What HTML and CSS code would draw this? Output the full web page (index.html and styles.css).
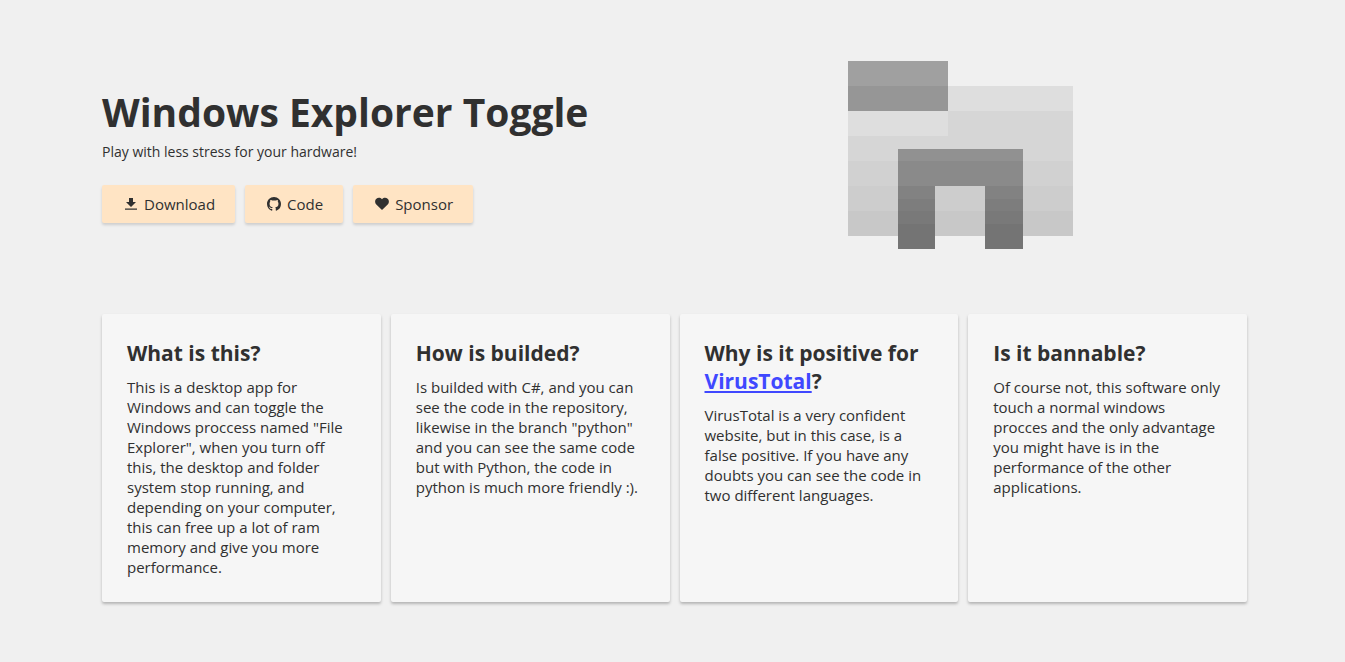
FILE: index.html
```html
<!DOCTYPE html>
<html lang="en">
<head>
<meta charset="utf-8">
<meta name="viewport" content="width=device-width, initial-scale=1">
<title>Windows Explorer Toggle</title>
<link rel="stylesheet" href="styles.css">
</head>
<body>
<main class="page">
  <header class="hero">
    <div class="intro">
      <h1 class="title">Windows Explorer Toggle</h1>
      <p class="tagline">Play with less stress for your hardware!</p>
      <div class="actions">
        <button class="button" type="button"><svg class="icon" viewBox="0 0 14 14" aria-hidden="true"><path d="M5 1h4v4h3L7 10 2 5h3zM1 11.500h12v1.300H1z"/></svg>Download</button>
        <button class="button" type="button"><svg class="icon" viewBox="0 0 16 16" aria-hidden="true"><path d="M8 0C3.580 0 0 3.580 0 8c0 3.540 2.290 6.530 5.470 7.590.4.070.55-.17.55-.38 0-.19-.01-.82-.01-1.490-2.010.37-2.530-.49-2.690-.94-.09-.23-.48-.94-.82-1.130-.28-.15-.68-.52-.01-.53.63-.01 1.080.58 1.230.82.72 1.210 1.870.87 2.330.66.07-.52.28-.87.51-1.070-1.780-.2-3.640-.89-3.640-3.950 0-.87.31-1.590.82-2.150-.08-.2-.36-1.020.08-2.120 0 0 .67-.21 2.200.82a7.600 7.600 0 0 1 4 0c1.530-1.040 2.200-.82 2.200-.82.44 1.100.16 1.920.08 2.120.51.56.82 1.270.82 2.150 0 3.070-1.870 3.750-3.650 3.950.29.25.54.73.54 1.480 0 1.070-.01 1.930-.01 2.200 0 .21.15.46.55.38A8.010 8.010 0 0 0 16 8c0-4.420-3.580-8-8-8z"/></svg>Code</button>
        <button class="button" type="button"><svg class="icon" viewBox="0 0 14 14" aria-hidden="true"><path d="M7 13 1.300 7.600C-.4 5.900-.2 3 1.400 1.700 3 .4 5.400.5 7 2.300 8.600.5 11 .4 12.600 1.700c1.600 1.300 1.800 4.200.1 5.900z"/></svg>Sponsor</button>
      </div>
    </div>
    <svg class="logo" viewBox="0 0 225 188" shape-rendering="crispEdges" role="img" aria-label="Windows Explorer Toggle logo">
      <path fill="#a0a0a0" d="M0 0h100v25H0z"/>
      <path fill="#969696" d="M0 25h100v25H0z"/>
      <path fill="#dedede" d="M100 25h125v25H100zM0 50h100v25H0z"/>
      <path fill="#d6d6d6" d="M100 50h125v50H0V75h100z"/>
      <path fill="#d1d1d1" d="M0 100h225v25H0z"/>
      <path fill="#cdcdcd" d="M0 125h225v25H0z"/>
      <path fill="#c8c8c8" d="M0 150h225v25H0z"/>
      <path fill="#919191" d="M50 88h125v12H50z"/>
      <path fill="#8a8a8a" d="M50 100h125v25H50z"/>
      <path fill="#828282" d="M50 125h37v13H50zM137 125h38v13h-38z"/>
      <path fill="#7d7d7d" d="M50 138h37v12H50zM137 138h38v12h-38z"/>
      <path fill="#797979" d="M50 150h37v13H50zM137 150h38v13h-38z"/>
      <path fill="#747474" d="M50 163h37v25H50zM137 163h38v25h-38z"/>
    </svg>
  </header>
  <section class="cards">
    <article class="card">
      <h2 class="card-title">What is this?</h2>
      <p class="card-text">This is a desktop app for Windows and can toggle the Windows proccess named "File Explorer", when you turn off this, the desktop and folder system stop running, and depending on your computer, this can free up a lot of ram memory and give you more performance.</p>
    </article>
    <article class="card">
      <h2 class="card-title">How is builded?</h2>
      <p class="card-text">Is builded with C#, and you can see the code in the repository, likewise in the branch "python" and you can see the same code but with Python, the code in python is much more friendly :).</p>
    </article>
    <article class="card">
      <h2 class="card-title">Why is it positive for <a class="link" href="#">VirusTotal</a>?</h2>
      <p class="card-text">VirusTotal is a very confident website, but in this case, is a false positive. If you have any doubts you can see the code in two different languages.</p>
    </article>
    <article class="card">
      <h2 class="card-title">Is it bannable?</h2>
      <p class="card-text">Of course not, this software only touch a normal windows procces and the only advantage you might have is in the performance of the other applications.</p>
    </article>
  </section>
</main>
</body>
</html>
```
FILE: styles.css
```css
* {
  box-sizing: border-box;
}

body {
  margin: 0;
  background: #f0f0f0;
  color: #303030;
  font-family: "Segoe UI", "Open Sans", "Noto Sans", sans-serif;
  font-size: 15px;
  font-weight: 400;
  line-height: 20px;
}

.page {
  padding: 61px 98px 60px 102px;
}

.hero {
  display: grid;
  grid-template-columns: 1fr 1fr;
  align-items: center;
  margin-bottom: 65px;
}

.intro {
  padding-bottom: 4px;
}

.title {
  margin: 0;
  font-size: 39px;
  font-weight: 700;
  line-height: 56px;
}

.tagline {
  margin: 2px 0 23px;
  font-size: 14px;
}

.actions {
  display: flex;
  gap: 10px;
}

.button {
  display: flex;
  align-items: center;
  gap: 6px;
  height: 38px;
  padding: 0 20px 0 22px;
  border: 0;
  border-radius: 2px;
  background: #ffe4c4;
  box-shadow: 0 2px 3px rgba(0, 0, 0, 0.15);
  color: inherit;
  font: inherit;
  cursor: pointer;
}

.icon {
  width: 14px;
  height: 14px;
  fill: #303030;
}

.logo {
  width: 225px;
  justify-self: center;
}

.cards {
  display: grid;
  grid-template-columns: repeat(4, 1fr);
  gap: 10px;
}

.card {
  padding: 25px;
  border-radius: 2px;
  background: #f6f6f6;
  box-shadow: 0 2px 3px rgba(0, 0, 0, 0.25);
}

.card-title {
  margin: 0 0 10px;
  font-size: 21px;
  font-weight: 700;
  line-height: 28px;
}

.card-text {
  margin: 0;
}

.link {
  color: #3f48ff;
}
```
